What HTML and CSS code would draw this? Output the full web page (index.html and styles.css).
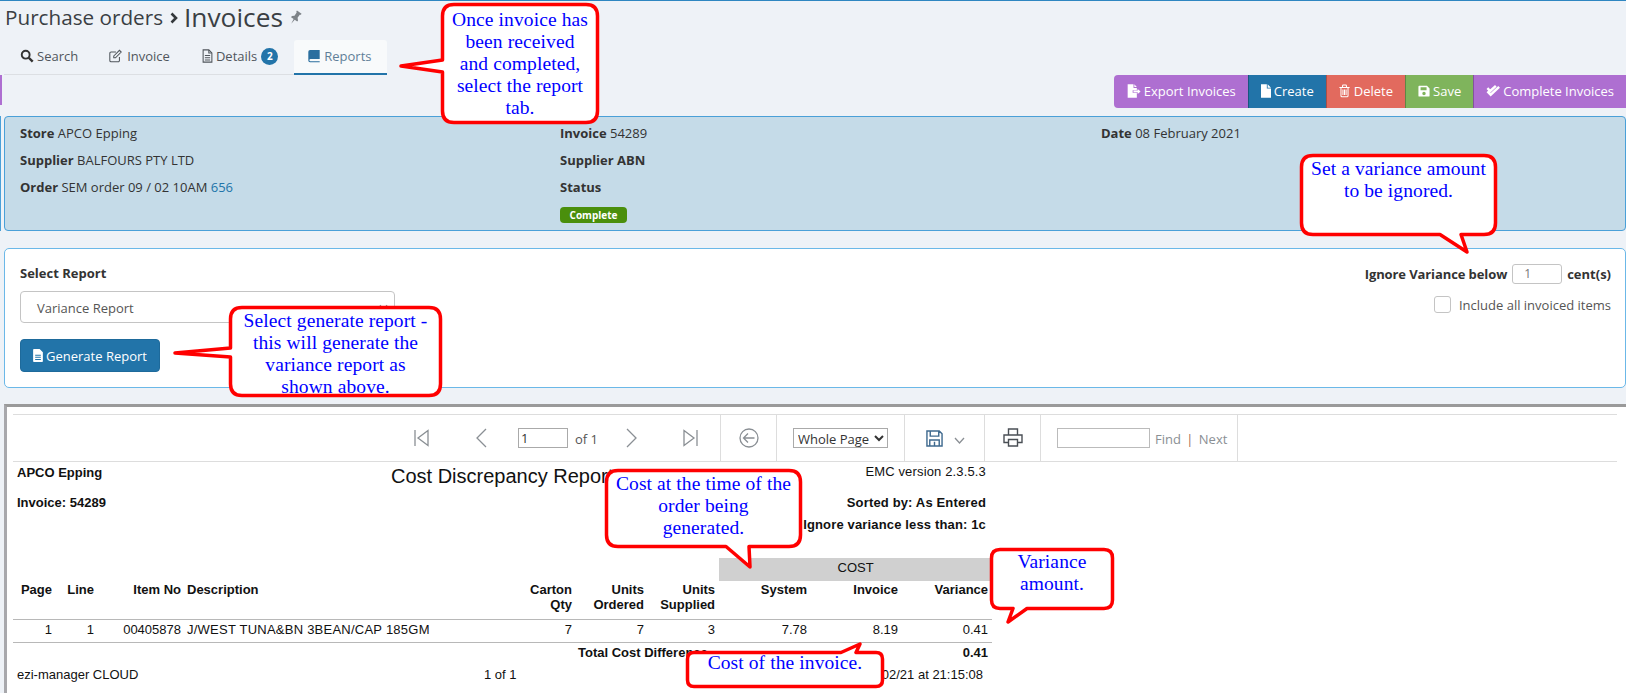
FILE: index.html
```html
<!DOCTYPE html>
<html lang="en">
<head>
<meta charset="utf-8">
<title>Purchase orders - Invoices</title>
<link rel="stylesheet" href="styles.css">
</head>
<body>
<div class="page">
  <header class="title-row">
    <span class="crumb">Purchase orders</span>
    <svg class="crumb-sep" viewBox="0 0 8 12"><path d="M1.500 1.500 6 6l-4.500 4.500"/></svg>
    <h1 class="title">Invoices</h1>
    <svg class="pin" viewBox="0 0 16 16"><path transform="rotate(35 8 8)" d="M5 1h6v1.200l-1 .8v4l2 2v1.500H8.700L8 16l-.7-5.500H4V9l2-2V3l-1-.8z"/></svg>
  </header>

  <nav class="tabs">
    <a class="tab tab-search"><svg class="ti ti-search" viewBox="0 0 16 16"><circle cx="6.500" cy="6.500" r="4.500" class="s2"/><path d="M10 10l4.500 4.500" class="s3"/></svg>Search</a>
    <a class="tab"><svg class="ti ti-edit" viewBox="0 0 16 16"><path class="s1" d="M12.500 9v4a1.500 1.500 0 0 1-1.500 1.500H3A1.500 1.500 0 0 1 1.500 13V5A1.500 1.500 0 0 1 3 3.500h5.500"/><path class="s1" d="M6 8l6.500-6.500 2 2L8 10H6z"/></svg>Invoice</a>
    <a class="tab"><svg class="ti ti-file" viewBox="0 0 12 16"><path class="s1" d="M1 1h6.500L11 4.500V15H1z"/><path class="s1" d="M3 7.500h6M3 10h6M3 12.500h6M7.500 1v3.500H11"/></svg>Details<span class="count">2</span></a>
    <a class="tab tab-active"><svg class="ti ti-book" viewBox="0 0 13 16"><path class="fill" d="M2 1h11v10.500H2.500a1.200 1.200 0 0 0 0 2.500H13v1H2a2 2 0 0 1-2-2V3a2 2 0 0 1 2-2z"/></svg>Reports</a>
  </nav>

  <div class="actions">
    <span class="edge edge-purple"></span>
    <button class="btn btn-first btn-purple"><svg class="bi bi-export" viewBox="0 0 18 16"><path class="wfill" d="M2 0h7v4.500h4V7H8v3h5v6H2z"/><path class="wfill" d="M10 0l3 3.200h-3zM9 7.500h5V5.500l3.500 3-3.500 3v-2H9z"/></svg>Export Invoices</button>
    <button class="btn btn-blue"><svg class="bi bi-create" viewBox="0 0 12 16"><path class="wfill" d="M0 0h7v5h5v11H0zM8 0l4 4H8z"/></svg>Create</button>
    <button class="btn btn-red"><svg class="bi bi-delete" viewBox="0 0 14 16"><path class="wline" d="M2.500 4v10a1.300 1.300 0 0 0 1.300 1.300h6.400a1.300 1.300 0 0 0 1.300-1.300V4M.5 3.500h13M4.500 3.500V1.500a1 1 0 0 1 1-1h3a1 1 0 0 1 1 1v2M5 6v7M7 6v7M9 6v7"/></svg>Delete</button>
    <button class="btn btn-green"><svg class="bi bi-save" viewBox="0 0 14 14"><path class="wfill" fill-rule="evenodd" d="M1.500 1h9L13.500 4v8.500a1 1 0 0 1-1 1h-11a1 1 0 0 1-1-1V2a1 1 0 0 1 1-1zM3 2.500v3.500h7V2.500zM7 8a2 2 0 1 0 0 4 2 2 0 0 0 0-4z"/></svg>Save</button>
    <button class="btn btn-last btn-purple"><svg class="bi bi-complete" viewBox="0 0 16 14"><path class="wline-b" d="M1.500 7.500l3.500 3.500 9-8.500M1.500 4l3 3 6-5.500"/></svg>Complete Invoices</button>
  </div>

  <div class="row-edge">
    <span class="edge edge-blue"></span>
    <section class="info">
      <div class="info-col">
        <p><b>Store</b> APCO Epping</p>
        <p><b>Supplier</b> BALFOURS PTY LTD</p>
        <p><b>Order</b> SEM order 09 / 02 10AM <a class="link">656</a></p>
      </div>
      <div class="info-col">
        <p><b>Invoice</b> 54289</p>
        <p><b>Supplier ABN</b></p>
        <p><b>Status</b></p>
        <span class="badge">Complete</span>
      </div>
      <div class="info-col">
        <p><b>Date</b> 08 February 2021</p>
      </div>
    </section>
  </div>

  <section class="form-panel">
    <div class="form-left">
      <label class="field-label">Select Report</label>
      <div class="select-box">Variance Report<svg class="select-caret" viewBox="0 0 10 6"><path d="M1 1l4 4 4-4"/></svg></div>
      <button class="gen-btn"><svg class="gen-icon" viewBox="0 0 12 16"><path class="wfill" fill-rule="evenodd" d="M1 0h7l4 4v11a1 1 0 0 1-1 1H1a1 1 0 0 1-1-1V1a1 1 0 0 1 1-1zM2.500 7v1.200h7V7zm0 2.600v1.200h7V9.600zm0 2.600v1.200h7v-1.200z"/></svg>Generate Report</button>
    </div>
    <div class="form-right">
      <div class="ignore-row"><b class="ignore-label">Ignore Variance below</b><span class="cents-input">1</span><b>cent(s)</b></div>
      <div class="include-row"><span class="checkbox"></span>Include all invoiced items</div>
    </div>
  </section>

  <section class="viewer">
    <div class="viewer-bar">
      <div class="cell cell-nav">
        <svg class="vi vi-w15" viewBox="0 0 15 20"><path d="M1 2v16M14 2.500 4 10l10 7.500z"/></svg>
        <svg class="vi vi-w11 m-prev" viewBox="0 0 11 20"><path d="M10 1 1 10l9 9"/></svg>
        <span class="page-input">1</span>
        <span class="of">of 1</span>
        <svg class="vi vi-w11 m-next" viewBox="0 0 11 20"><path d="M1 1l9 9-9 9"/></svg>
        <svg class="vi vi-w15 m-last" viewBox="0 0 15 20"><path d="M14 2v16M1 2.500 11 10 1 17.500z"/></svg>
      </div>
      <div class="cell cell-back">
        <svg class="vi vi-w20" viewBox="0 0 20 20"><circle cx="10" cy="10" r="9"/><path d="M15.500 10H4.500M9 5.500 4.500 10 9 14.500"/></svg>
      </div>
      <div class="cell cell-zoom">
        <select class="zoom-select"><option>Whole Page</option></select>
      </div>
      <div class="cell cell-save">
        <svg class="vi-floppy vi-w17" viewBox="0 0 18 18"><path d="M1 1h13l3 3v13H1zM4.500 1v5.500h9V1M4 17v-6.500h10V17M9 12.500V17"/></svg>
        <svg class="vi vi-w10 m-caret" viewBox="0 0 11 7"><path d="M1 1l4.500 5L10 1"/></svg>
      </div>
      <div class="cell cell-print">
        <svg class="vi-dark vi-w20" viewBox="0 0 20 20"><path d="M5.500 7V1h9v6M5.500 14.500H1V7h18v7.500h-4.500M5.500 11.500h9V18h-9z"/></svg>
      </div>
      <div class="cell cell-find">
        <span class="find-input"></span>
        <span class="find-text">Find <span class="pipe">|</span> Next</span>
      </div>
    </div>

    <div class="report-head">
      <div class="rh-left">
        <p>APCO Epping</p>
        <p class="rh-second">Invoice: 54289</p>
      </div>
      <div class="rh-title">Cost Discrepancy Report</div>
      <div class="rh-right">
        <p class="rh-version">EMC version 2.3.5.3</p>
        <p class="rh-sorted">Sorted by: As Entered</p>
        <p class="rh-ignore">Ignore variance less than: 1c</p>
      </div>
    </div>

    <table class="report">
      <colgroup>
        <col class="c-43"><col class="c-42"><col class="c-87"><col class="c-319">
        <col class="c-72"><col class="c-72"><col class="c-71"><col class="c-92"><col class="c-91"><col class="c-90">
      </colgroup>
      <tr class="band-row"><td colspan="7"></td><td colspan="3" class="band">COST</td></tr>
      <tr class="head-row">
        <th>Page</th><th>Line</th><th>Item No</th><th class="left">Description</th>
        <th>Carton<br>Qty</th><th>Units<br>Ordered</th><th>Units<br>Supplied</th>
        <th>System</th><th>Invoice</th><th>Variance</th>
      </tr>
      <tr class="data-row">
        <td>1</td><td>1</td><td>00405878</td><td class="left desc">J/WEST TUNA&amp;BN 3BEAN/CAP 185GM</td>
        <td>7</td><td>7</td><td>3</td><td>7.78</td><td>8.19</td><td>0.41</td>
      </tr>
      <tr class="total-row">
        <td colspan="5"></td><td colspan="4" class="left total-label"><span class="total-text">Total Cost Difference</span></td><td>0.41</td>
      </tr>
    </table>
    <div class="report-foot">
      <span>ezi-manager CLOUD</span>
      <span>1 of 1</span>
      <span>Printed 09/02/21 at 21:15:08</span>
    </div>
  </section>

  <aside class="callout c1">
    <svg class="bubble" viewBox="0 0 158 121"><path d="M13 1.500H145Q156.500 1.500 156.500 13V108Q156.500 119.500 145 119.500H13Q1.500 119.500 1.500 108V69L-40 63 1.500 57V13Q1.500 1.500 13 1.500Z"/></svg>
    <p>Once invoice has<br>been received<br>and completed,<br>select the report<br>tab.</p>
  </aside>
  <aside class="callout c2">
    <svg class="bubble" viewBox="0 0 197 82"><path d="M13 1.500H184Q195.500 1.500 195.500 13V69Q195.500 80.500 184 80.500H161L167 98 140 80.500H13Q1.500 80.500 1.500 69V13Q1.500 1.500 13 1.500Z"/></svg>
    <p>Set a variance amount<br>to be ignored.</p>
  </aside>
  <aside class="callout c3">
    <svg class="bubble" viewBox="0 0 213 91"><path d="M13 1.500H200Q211.500 1.500 211.500 13V78Q211.500 89.500 200 89.500H13Q1.500 89.500 1.500 78V51L-54 47 1.500 42V13Q1.500 1.500 13 1.500Z"/></svg>
    <p>Select generate report -<br>this will generate the<br>variance report as<br>shown above.</p>
  </aside>
  <aside class="callout c4">
    <svg class="bubble" viewBox="0 0 197 79"><path d="M13 1.500H184Q195.500 1.500 195.500 13V66Q195.500 77.500 184 77.500H144L145 98 121 77.500H13Q1.500 77.500 1.500 66V13Q1.500 1.500 13 1.500Z"/></svg>
    <p>Cost at the time of the<br>order being<br>generated.</p>
  </aside>
  <aside class="callout c5">
    <svg class="bubble" viewBox="0 0 124 62"><path d="M10 1.500H114Q122.500 1.500 122.500 10V52Q122.500 60.500 114 60.500H37L18 74 23 60.500H10Q1.500 60.500 1.500 52V10Q1.500 1.500 10 1.500Z"/></svg>
    <p>Variance<br>amount.</p>
  </aside>
  <aside class="callout c6">
    <svg class="bubble" viewBox="0 0 198 37"><path d="M8 1.500H155L174 -7 170 1.500H190Q196.500 1.500 196.500 8V29Q196.500 35.500 190 35.500H8Q1.500 35.500 1.500 29V8Q1.500 1.500 8 1.500Z"/></svg>
    <p>Cost of the invoice.</p>
  </aside>
</div>
</body>
</html>
```

FILE: styles.css
```css
* { box-sizing: border-box; }
html, body { margin: 0; padding: 0; }
body { font-family: "Open Sans", "Liberation Sans", sans-serif; font-size: 13px; color: #333; }
p { margin: 0; }

.page {
  position: relative;
  width: 1626px;
  height: 693px;
  overflow: hidden;
  background: #eef2f7;
  border-top: 1px solid #2e86c1;
}

/* title */
.title-row { display: flex; align-items: center; height: 39px; padding: 0 0 7px 5px; color: #3a3f44; }
.crumb { font-size: 20.700px; line-height: 30px; }
.crumb-sep { width: 8px; height: 12px; margin: 2px 6px 0 7px; fill: none; stroke: #33383c; stroke-width: 2.600; }
.title { margin: 0; font-size: 26.300px; font-weight: 400; line-height: 32px; }
.pin { width: 15px; height: 15px; margin-left: 5px; fill: #7d8388; }

/* tabs */
.tabs { display: flex; width: 383px; height: 35px; margin-left: 4px; border-bottom: 1px solid #dcdfe3; }
.tab { display: flex; align-items: center; padding: 0 16px 2px; color: #50565c; white-space: nowrap; }
.tab-search { padding-right: 14px; }
.tab-active { width: 94px; height: 35px; padding-left: 14px; padding-right: 0; background: #f8fafb; border-bottom: 2px solid #2274a9; border-radius: 3px 3px 0 0; color: #5f7f98; }
.ti { height: 14px; fill: none; stroke: #50565c; flex: none; }
.ti-search { width: 14px; margin-right: 3px; stroke: #333; }
.ti-edit { width: 15px; margin-right: 4px; }
.ti-file { width: 11px; margin-right: 3px; }
.ti-book { width: 12px; margin-right: 4px; stroke: none; fill: #2b6f9f; }
.s1 { stroke-width: 1.200; }
.s2 { stroke-width: 2.200; }
.s3 { stroke-width: 2.800; }
.count { display: flex; align-items: center; justify-content: center; width: 17px; height: 17px; margin-left: 4px; border-radius: 50%; background: #2274a9; color: #fff; font-size: 10px; font-weight: 700; }

/* actions */
.actions { display: flex; height: 33px; margin-bottom: 8px; }
.edge { display: block; flex: none; width: 1px; }
.edge-purple { height: 30px; margin-right: auto; width: 2px; background: #ae6fd1; }
.btn { display: flex; align-items: center; height: 33px; padding: 0 12px 1px; border: 0; border-left: 1px solid rgba(0,0,0,.25); color: #fff; font: 13px "Open Sans", sans-serif; white-space: nowrap; }
.btn-first { border-left: 0; border-radius: 4px 0 0 4px; }
.btn-purple { background: #ae6fd1; }
.btn-blue { background: #2274a9; }
.btn-red { background: #e26a5e; }
.btn-green { background: #7fb45c; }
.bi { height: 14px; flex: none; }
.bi-export { width: 15px; margin-right: 3px; }
.bi-create { width: 10px; margin-right: 3px; }
.bi-delete { width: 11px; margin-right: 4px; }
.bi-save { width: 12px; margin-right: 3px; }
.bi-complete { width: 15px; margin-right: 2px; }
.wfill { fill: #fff; }
.wline { fill: none; stroke: #fff; stroke-width: 1.300; }
.wline-b { fill: none; stroke: #fff; stroke-width: 2.600; }

/* info */
.row-edge { display: flex; height: 115px; margin-bottom: 17px; }
.edge-blue { height: 115px; margin-right: 3px; background: #4aa0d8; }
.info { flex: 1; display: grid; grid-template-columns: 540px 541px 1fr; padding: 3px 0 0 15px; background: #c5dbe8; border: 1px solid #4aa0d8; border-radius: 4px; }
.info-col p { height: 27px; line-height: 27px; }
.link { color: #2274a9; }
.badge { display: block; width: 67px; height: 16px; margin-top: 6px; background: #4a8f0c; border-radius: 4px; color: #fff; font-size: 10px; font-weight: 700; line-height: 16px; text-align: center; }

/* form */
.form-panel { display: flex; justify-content: space-between; height: 140px; margin: 0 0 16px 4px; padding: 14px 14px 0 15px; background: #fff; border: 1px solid #6bb8e8; border-radius: 5px; }
.form-left { display: flex; flex-direction: column; align-items: flex-start; }
.field-label { font-weight: 700; line-height: 20px; }
.select-box { position: relative; display: flex; align-items: center; width: 375px; height: 32px; margin-top: 8px; padding: 1px 0 0 16px; border: 1px solid #c4c4c4; border-radius: 4px; color: #555; }
.select-caret { position: absolute; right: 6px; top: 12px; width: 9px; height: 6px; fill: none; stroke: #888; stroke-width: 1.200; }
.gen-btn { display: flex; align-items: center; justify-content: center; width: 140px; height: 33px; margin-top: 16px; padding: 0; border: 1px solid #1e6a9b; border-radius: 4px; background: #2274a9; color: #fff; font: 13px "Open Sans", sans-serif; }
.gen-icon { width: 10px; height: 13px; margin-right: 3px; }
.form-right { display: flex; flex-direction: column; align-items: flex-end; padding-top: 1px; }
.ignore-row { display: flex; align-items: center; height: 19px; }
.ignore-label { letter-spacing: -.1px; }
.cents-input { width: 50px; height: 20px; margin: 0 5px 0 5px; padding-left: 11px; border: 1px solid #c4c4c4; border-radius: 3px; color: #777; font-size: 12px; line-height: 18px; }
.include-row { display: flex; align-items: center; height: 17px; margin-top: 13px; color: #555; }
.checkbox { width: 17px; height: 17px; margin-right: 8px; border: 1px solid #c4c4c4; border-radius: 3px; }

/* viewer */
.viewer { height: 300px; margin-left: 4px; padding: 7px 0 0 6px; background: #fff; border-top: 3px solid #9a9a9a; border-left: 3px solid #a8a8ac; font-family: "Liberation Sans", Arial, sans-serif; color: #111; }
.viewer-bar { display: flex; width: 1604px; height: 48px; border-top: 1px solid #ddd; border-bottom: 1px solid #ddd; font-family: "Open Sans", sans-serif; font-size: 13px; }
.cell { display: flex; align-items: center; border-right: 1px solid #ddd; }
.cell-nav { width: 708px; padding-left: 401px; }
.cell-back { width: 56px; justify-content: center; }
.cell-zoom { width: 128px; padding-left: 16px; }
.cell-save { width: 80px; padding-left: 21px; }
.cell-print { width: 56px; justify-content: center; }
.cell-find { width: 197px; padding-left: 16px; }
.vi, .vi-dark, .vi-floppy { flex: none; height: 20px; fill: none; stroke: #8a8f94; stroke-width: 1.300; }
.vi-dark { stroke: #4a4f55; stroke-width: 1.400; }
.vi-floppy { stroke: #3f6a8f; stroke-width: 1.500; }
.vi-w15 { width: 15px; }
.vi-w11 { width: 11px; }
.vi-w20 { width: 20px; }
.vi-w17 { width: 17px; height: 17px; }
.vi-w10 { width: 11px; height: 7px; margin-top: 4px; }
.m-prev { margin-left: 47px; }
.m-next { margin-left: 28px; }
.m-last { margin-left: 46px; }
.m-caret { margin-left: 11px; }
.page-input { width: 50px; height: 20px; margin-left: 31px; padding-left: 2px; border: 1px solid #aaa; color: #333; line-height: 18px; }
.of { margin: 2px 0 0 7px; color: #555; }
.zoom-select { width: 95px; height: 20px; padding: 0; background: #fff; border: 1px solid #aaa; border-radius: 0; color: #333; font: 13px "Open Sans", sans-serif; }
.find-input { width: 93px; height: 20px; border: 1px solid #bbb; }
.find-text { margin: 2px 0 0 5px; color: #8a8f94; }
.pipe { margin: 0 2px; color: #a06a50; }

.report-head { display: grid; grid-template-columns: 378px 1fr auto; width: 979px; height: 96px; }
.rh-left { padding: 3px 0 0 4px; font-size: 13px; font-weight: 700; line-height: 16px; }
.rh-second { margin-top: 14px; }
.rh-title { padding-top: 2px; font-size: 20px; line-height: 24px; }
.rh-right { padding: 2px 6px 0 0; font-size: 13px; letter-spacing: .15px; line-height: 16px; text-align: right; }
.rh-sorted { margin-top: 15px; font-weight: 700; }
.rh-ignore { margin-top: 6px; font-weight: 700; }

.report { width: 979px; table-layout: fixed; border-collapse: collapse; font-size: 13px; line-height: 15px; }
.report th, .report td { padding: 0 4px 0 0; text-align: right; vertical-align: top; }
.report .left { padding: 0 0 0 2px; text-align: left; }
.c-43 { width: 43px; }
.c-42 { width: 42px; }
.c-87 { width: 87px; }
.c-319 { width: 319px; }
.c-72 { width: 72px; }
.c-71 { width: 71px; }
.c-92 { width: 92px; }
.c-91 { width: 91px; }
.c-90 { width: 90px; }
.band-row td { height: 23px; }
.report .band { padding: 2px 0 0; background: #d0d0d0; text-align: center; }
.report .head-row th { height: 38px; padding-top: 1px; border-bottom: 1px solid #b8b8b8; }
.report .head-row th.left { padding-left: 2px; }
.report .data-row td { height: 23px; padding-top: 2px; border-bottom: 1px solid #b8b8b8; }
.report .data-row .desc { letter-spacing: .24px; }
.report .total-row td { height: 20px; padding-top: 2px; font-weight: 700; }
.total-text { white-space: nowrap; }
.report-foot { display: grid; grid-template-columns: 467px 1fr auto; width: 979px; margin-top: 5px; padding: 0 9px 0 4px; font-size: 13px; line-height: 16px; }

/* callouts */
.callout { position: absolute; color: #00f; font-family: "Liberation Serif", "Times New Roman", serif; font-size: 19.500px; letter-spacing: .1px; line-height: 22px; text-align: center; }
.callout p { position: relative; margin: 0; }
.bubble { position: absolute; left: 0; top: 0; width: 100%; height: 100%; overflow: visible; fill: #fff; stroke: #f00; stroke-width: 3.500; stroke-linejoin: round; }
.c1 { left: 441px; top: 2px; width: 158px; height: 121px; padding-top: 6px; }
.c2 { left: 1300px; top: 153px; width: 197px; height: 82px; padding-top: 4px; }
.c3 { left: 229px; top: 305px; width: 213px; height: 91px; padding-top: 4px; }
.c4 { left: 605px; top: 468px; width: 197px; height: 79px; padding-top: 4px; }
.c5 { left: 990px; top: 547px; width: 124px; height: 62px; padding-top: 3px; }
.c6 { left: 686px; top: 650px; width: 198px; height: 37px; padding-top: 1px; }
```
